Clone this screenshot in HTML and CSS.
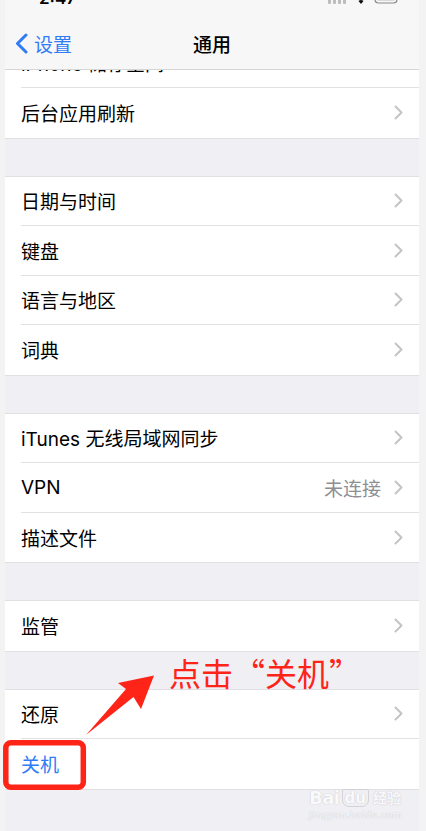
FILE: index.html
```html
<!DOCTYPE html>
<html lang="zh-CN">
<head>
<meta charset="utf-8">
<title>通用</title>
<link rel="stylesheet" href="styles.css">
</head>
<body>
<div class="screen">
  <div class="list">
    <div class="group">
      <div class="row"><div class="row-body"><span class="label">iPhone 储存空间</span><svg class="chev" width="9" height="15" viewBox="0 0 9 15"><path d="M1.5 1.5 L7.5 7.5 L1.5 13.5"/></svg></div></div>
      <div class="row"><div class="row-body"><span class="label">后台应用刷新</span><svg class="chev" width="9" height="15" viewBox="0 0 9 15"><path d="M1.5 1.5 L7.5 7.5 L1.5 13.5"/></svg></div></div>
    </div>
    <div class="group">
      <div class="row"><div class="row-body"><span class="label">日期与时间</span><svg class="chev" width="9" height="15" viewBox="0 0 9 15"><path d="M1.5 1.5 L7.5 7.5 L1.5 13.5"/></svg></div></div>
      <div class="row"><div class="row-body"><span class="label">键盘</span><svg class="chev" width="9" height="15" viewBox="0 0 9 15"><path d="M1.5 1.5 L7.5 7.5 L1.5 13.5"/></svg></div></div>
      <div class="row"><div class="row-body"><span class="label">语言与地区</span><svg class="chev" width="9" height="15" viewBox="0 0 9 15"><path d="M1.5 1.5 L7.5 7.5 L1.5 13.5"/></svg></div></div>
      <div class="row"><div class="row-body"><span class="label">词典</span><svg class="chev" width="9" height="15" viewBox="0 0 9 15"><path d="M1.5 1.5 L7.5 7.5 L1.5 13.5"/></svg></div></div>
    </div>
    <div class="group">
      <div class="row"><div class="row-body"><span class="label">iTunes 无线局域网同步</span><svg class="chev" width="9" height="15" viewBox="0 0 9 15"><path d="M1.5 1.5 L7.5 7.5 L1.5 13.5"/></svg></div></div>
      <div class="row"><div class="row-body"><span class="label">VPN</span><span class="detail">未连接</span><svg class="chev" width="9" height="15" viewBox="0 0 9 15"><path d="M1.5 1.5 L7.5 7.5 L1.5 13.5"/></svg></div></div>
      <div class="row"><div class="row-body"><span class="label">描述文件</span><svg class="chev" width="9" height="15" viewBox="0 0 9 15"><path d="M1.5 1.5 L7.5 7.5 L1.5 13.5"/></svg></div></div>
    </div>
    <div class="group">
      <div class="row"><div class="row-body"><span class="label">监管</span><svg class="chev" width="9" height="15" viewBox="0 0 9 15"><path d="M1.5 1.5 L7.5 7.5 L1.5 13.5"/></svg></div></div>
    </div>
    <div class="group">
      <div class="row"><div class="row-body"><span class="label">还原</span><svg class="chev" width="9" height="15" viewBox="0 0 9 15"><path d="M1.5 1.5 L7.5 7.5 L1.5 13.5"/></svg></div></div>
      <div class="row"><div class="row-body"><span class="label blue">关机</span></div></div>
    </div>
  </div>

  <header class="navbar">
    <div class="status">
      <span class="time">2:47</span>
      <span class="status-icons">
        <svg width="20" height="12" viewBox="0 0 20 12"><rect x="0" y="7" width="3" height="5" rx="1" fill="#bdbdbd"/><rect x="5" y="5" width="3" height="7" rx="1" fill="#bdbdbd"/><rect x="10" y="3" width="3" height="9" rx="1" fill="#bdbdbd"/><rect x="15" y="0" width="3" height="12" rx="1" fill="#bdbdbd"/></svg>
        <svg width="14" height="12" viewBox="0 0 14 12"><path d="M7 12 L4.5 9 A4 4 0 0 1 9.5 9 Z" fill="#111"/></svg>
        <svg width="26" height="13" viewBox="0 0 26 13"><rect x="1" y="1" width="22" height="11" rx="3.5" fill="none" stroke="#8a8a8a" stroke-width="1.2"/><rect x="3" y="3" width="18" height="7" rx="2" fill="#d9d9d9"/></svg>
      </span>
    </div>
    <div class="nav">
      <div class="back">
        <svg width="13" height="21" viewBox="0 0 13 21"><path d="M11 2 L2.5 10.5 L11 19" fill="none" stroke="#2f7cf6" stroke-width="3" stroke-linecap="round" stroke-linejoin="round"/></svg>
        <span>设置</span>
      </div>
      <div class="title">通用</div>
      <div></div>
    </div>
  </header>
</div>

<div class="watermark">
  <div class="wm-top"><span class="wm-bai">Bai</span><span class="wm-du">du</span><span class="wm-jy">经验</span></div>
  <div class="wm-url">jingyan.baidu.com</div>
</div>

<svg class="marks" width="426" height="831" viewBox="0 0 426 831">
  <polygon points="86,735 126,689 118,683 154,675.5 141,709 133.5,697" fill="#ff2418"/>
  <rect x="5.8" y="742.8" width="77.5" height="44.5" rx="5" fill="none" stroke="#ff2418" stroke-width="5.5"/>
</svg>
<div class="callout">点击“关机”</div>
</body>
</html>
```

FILE: styles.css
```css
html, body {
  margin: 0;
  padding: 0;
}
body {
  width: 426px;
  height: 831px;
  overflow: hidden;
  background: #f3f3f4;
  position: relative;
  font-family: Inter, "Noto Sans CJK SC", sans-serif;
}
.screen {
  position: relative;
  width: 414px;
  height: 831px;
  margin: 0 7px 0 5px;
  background: #efeff4;
  overflow: hidden;
}
.list {
  padding-top: 38.5px;
  display: flex;
  flex-direction: column;
  gap: 39px;
}
.group {
  background: #fff;
  box-shadow: 0 0.6px 0 #d6d6da, 0 -0.6px 0 #d6d6da;
}
.row {
  height: 49.5px;
  padding-left: 16px;
  display: flex;
}
.row-body {
  flex: 1;
  display: flex;
  align-items: center;
  padding-right: 16px;
  border-bottom: 1px solid #e2e2e4;
  box-sizing: border-box;
}
.row:last-child .row-body {
  border-bottom: none;
}
.label {
  flex: 1;
  font-size: 19px;
  color: #000;
}
.label.blue {
  color: #2f7cf6;
}
.detail {
  font-size: 19px;
  color: #8e8e93;
  margin-right: 13px;
}
.chev {
  display: block;
}
.chev path {
  fill: none;
  stroke: #c4c4c8;
  stroke-width: 2;
  stroke-linecap: round;
  stroke-linejoin: round;
}

.navbar {
  position: absolute;
  top: 0;
  left: 0;
  right: 0;
  height: 69px;
  background: #f7f7f7;
  border-bottom: 1px solid #d6d6d8;
  overflow: hidden;
}
.status {
  height: 20px;
  margin-top: -12px;
  display: flex;
  align-items: flex-end;
  justify-content: space-between;
  padding: 0 19px 0 34px;
}
.time {
  font-size: 17px;
  font-weight: 600;
  color: #000;
  line-height: 20px;
}
.status-icons {
  display: flex;
  align-items: flex-end;
  gap: 6px;
  margin-bottom: 4px;
}
.nav {
  margin-top: 10px;
  height: 50px;
  display: grid;
  grid-template-columns: 1fr auto 1fr;
  align-items: center;
}
.back {
  display: flex;
  align-items: center;
  gap: 6px;
  padding-left: 10px;
  color: #2f7cf6;
  font-size: 19px;
}
.back svg {
  display: block;
}
.title {
  font-size: 19px;
  font-weight: 500;
  color: #000;
}

.watermark {
  position: absolute;
  left: 309px;
  top: 776px;
  width: 92px;
  color: #fbfbfd;
  font-family: "DejaVu Sans", "Noto Sans CJK SC", sans-serif;
  text-shadow: 0 0 1px #c9c9cf, 0 0 1px #c9c9cf;
  opacity: 0.9;
}
.wm-top {
  display: flex;
  align-items: flex-end;
  height: 31px;
}
.wm-bai {
  font-size: 18px;
  font-weight: bold;
  line-height: 18px;
  letter-spacing: -0.5px;
}
.wm-du {
  font-size: 15px;
  font-weight: bold;
  line-height: 16px;
  margin-left: 2px;
  padding: 0 2px;
  border: 1px solid #d0d0d6;
  border-radius: 2px 2px 7px 7px;
}
.wm-jy {
  font-size: 14px;
  font-weight: bold;
  line-height: 17px;
  margin-left: 4px;
}
.wm-url {
  font-family: "DejaVu Serif", serif;
  font-size: 10px;
  line-height: 14px;
  margin-top: 1px;
}

.marks {
  position: absolute;
  left: 0;
  top: 0;
  pointer-events: none;
}
.callout {
  position: absolute;
  left: 169px;
  top: 655px;
  font-family: "Noto Sans CJK SC", sans-serif;
  font-size: 32px;
  line-height: 34px;
  color: #ff2418;
  white-space: nowrap;
}
```
